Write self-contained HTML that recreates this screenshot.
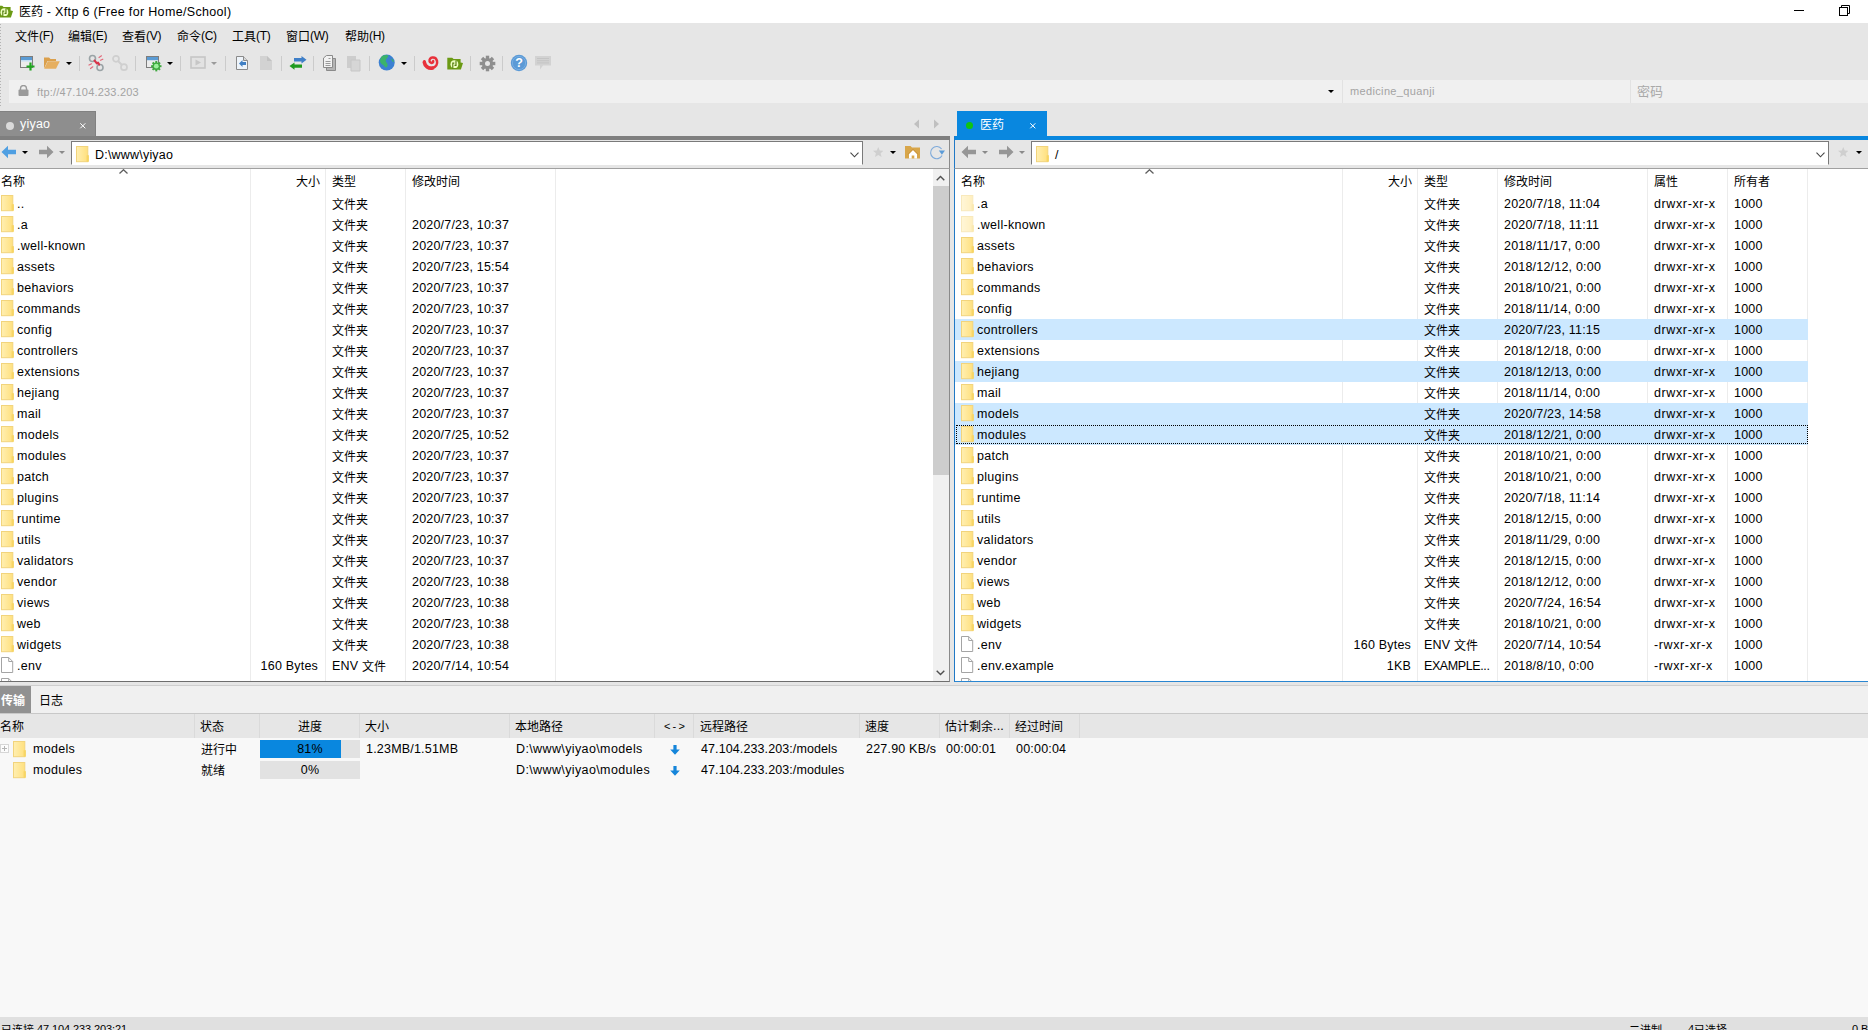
<!DOCTYPE html>
<html lang="zh-CN"><head><meta charset="utf-8"><title>医药 - Xftp 6 (Free for Home/School)</title>
<style>
*{margin:0;padding:0;box-sizing:border-box}
html,body{width:1868px;height:1030px;overflow:hidden;background:#e6e6e6}
body{font-family:"Liberation Sans","Noto Sans CJK SC",sans-serif;font-size:12px;color:#000;position:relative}
#app{position:absolute;left:0;top:0;width:1868px;height:1030px;overflow:hidden;background:#e6e6e6}
.a{position:absolute}
.t{position:absolute;white-space:nowrap;line-height:21px;height:21px;font-size:12.5px;letter-spacing:.2px;margin-top:1px}
.c{font-size:12px;letter-spacing:0;position:relative;top:1px}
.nm{letter-spacing:.3px}
.ex{letter-spacing:-.4px}
.big .c{font-size:13px}
#title .c{top:0}
.mn{font-size:12px;letter-spacing:-.3px}
.sb{font-size:11px;letter-spacing:-.1px}
.sb .c{font-size:11px}
.at{letter-spacing:.62px}
.ic{position:absolute}
.r{position:absolute;left:0;height:21px}
.sel{background:#cce8ff;box-shadow:-1px 0 0 #cce8ff}
.vl{position:absolute;width:1px;background:#ececec}
.hd{position:absolute;white-space:nowrap;line-height:22px;height:22px;margin-top:1px}
.sep{position:absolute;top:56px;width:1px;height:15px;background:#cbcbcb}
.dd{position:absolute;width:0;height:0;border-left:3px solid transparent;border-right:3px solid transparent;border-top:3px solid #000}
</style></head><body><div id="app">
<svg width="0" height="0" style="position:absolute"><defs><linearGradient id="fg" x1="0" x2="1" y1="0" y2="0"><stop offset="0" stop-color="#ffefb2"/><stop offset="1" stop-color="#ffe07e"/></linearGradient></defs></svg>

<div class="a" style="left:0;top:0;width:1868px;height:23px;background:#fff"></div>
<svg class="a" style="left:-3.2px;top:4.5px" width="17" height="13" viewBox="0 0 17 13"><path d="M.3 .8H5.2L6.6 2.1H13.6V5.6L16 5.9 13.9 12.4H.3Z" fill="#6b9a14"/><circle cx="7.4" cy="7.2" r="3.9" fill="#f0ffc4"/><path d="M5.8 11.4V6.1H7.3M9 3.4V8.4H7.5" fill="none" stroke="#557f10" stroke-width="1.15"/></svg>
<div class="t" id="title" style="left:19px;top:1px;font-size:12.5px;letter-spacing:.33px"><span class="c">医药</span> - Xftp 6 (Free for Home/School)</div>
<div class="a" style="left:1794px;top:10px;width:10px;height:1px;background:#000"></div>
<svg class="a" style="left:1839px;top:5px" width="12" height="12" viewBox="0 0 12 12"><path d="M2.5 2.5V.5H10.5V8.5H8.5" fill="none" stroke="#000"/><rect x=".5" y="2.5" width="8" height="8" fill="#fff" stroke="#000"/></svg>
<div class="t mn" style="left:15px;top:25px"><span class="c">文件</span>(F)</div>
<div class="t mn" style="left:68px;top:25px"><span class="c">编辑</span>(E)</div>
<div class="t mn" style="left:122px;top:25px"><span class="c">查看</span>(V)</div>
<div class="t mn" style="left:177px;top:25px"><span class="c">命令</span>(C)</div>
<div class="t mn" style="left:232px;top:25px"><span class="c">工具</span>(T)</div>
<div class="t mn" style="left:286px;top:25px"><span class="c">窗口</span>(W)</div>
<div class="t mn" style="left:345px;top:25px"><span class="c">帮助</span>(H)</div>
<div class="a" style="left:0;top:24px;width:1px;height:82px;background:repeating-linear-gradient(to bottom,#b4b4b4 0,#b4b4b4 1px,transparent 1px,transparent 3px)"></div>
<!-- toolbar icons -->
<svg class="a" style="left:19px;top:54px" width="18" height="19" viewBox="0 0 18 19"><rect x="1.5" y="2.5" width="12" height="11" fill="#ececec" stroke="#7d7d7d"/><rect x="2" y="3" width="11" height="3" fill="#5a9bd4"/><rect x="2" y="6" width="11" height="1.5" fill="#c4def4"/><path d="M11.5 8.5V16.5M7.5 12.5H15.5" stroke="#1fa51f" stroke-width="2.2"/></svg>
<svg class="a" style="left:43px;top:56px" width="18" height="14" viewBox="0 0 18 14"><path d="M1 1.5H6L7.5 3H13V5H4.5L1 12.5Z" fill="#dba04c"/><path d="M4.8 5.2H16.8L13 12.8H1.2Z" fill="#e6af60"/></svg>
<div class="dd" style="left:66px;top:62px"></div>
<div class="sep" style="left:79px"></div>
<svg class="a" style="left:87px;top:54px" width="18" height="18" viewBox="0 0 18 18"><circle cx="5.5" cy="4.5" r="3" fill="none" stroke="#9aa3a6" stroke-width="1.6"/><circle cx="13" cy="13.5" r="3" fill="none" stroke="#9aa3a6" stroke-width="1.6"/><path d="M7.5 6.5L10 9.5M11 8.5L12.2 10.6" stroke="#d8344a" stroke-width="2" stroke-linecap="round"/><path d="M12 3.5L14.5 1.8M13.5 6.2L15.8 5.2M2 11L4.5 9.8M3.5 14.5L5.8 12.8" stroke="#e26a7a" stroke-width="1.2" stroke-linecap="round"/></svg>
<svg class="a" style="left:111px;top:54px" width="18" height="18" viewBox="0 0 18 18"><circle cx="5" cy="4.8" r="3" fill="none" stroke="#cfcfcf" stroke-width="1.7"/><circle cx="13" cy="13.2" r="3" fill="none" stroke="#cfcfcf" stroke-width="1.7"/><path d="M7 7L11 11" stroke="#cfcfcf" stroke-width="2"/></svg>
<div class="sep" style="left:135px"></div>
<svg class="a" style="left:145px;top:54px" width="18" height="19" viewBox="0 0 18 19"><rect x="1.5" y="2.5" width="12" height="11" fill="#ececec" stroke="#7d7d7d"/><rect x="2" y="3" width="11" height="3.2" fill="#5a9bd4"/><g transform="translate(11.3 12.2)"><g fill="#3fa93f"><rect x="-1" y="-5.2" width="2" height="10.4"/><rect x="-1" y="-5.2" width="2" height="10.4" transform="rotate(45)"/><rect x="-1" y="-5.2" width="2" height="10.4" transform="rotate(90)"/><rect x="-1" y="-5.2" width="2" height="10.4" transform="rotate(135)"/><circle r="3.8"/></g><circle r="2.4" fill="#9cf09c"/></g></svg>
<div class="dd" style="left:167px;top:62px"></div>
<div class="sep" style="left:180px"></div>
<svg class="a" style="left:190px;top:56px" width="16" height="13" viewBox="0 0 16 13"><rect x="1" y="1" width="14" height="11" fill="#e2e2e2" stroke="#c6c6c6" stroke-width="1.6"/><path d="M5.5 3.5L11 6.5 5.5 9.5Z" fill="#c6c6c6"/></svg>
<div class="dd" style="left:211px;top:62px;border-top-color:#9a9a9a"></div>
<div class="sep" style="left:225px"></div>
<svg class="a" style="left:235px;top:55px" width="14" height="16" viewBox="0 0 14 16"><path d="M1.5 1.5H8.5L12.5 5.5V14.5H1.5Z" fill="#eef4fa" stroke="#8a8a8a"/><path d="M8.5 1.5V5.5H12.5" fill="#d8d8d8" stroke="#8a8a8a"/><path d="M4 8.5L7.5 5V7H11V10H7.5V12Z" fill="#3f7fc4"/></svg>
<svg class="a" style="left:259px;top:55px" width="14" height="16" viewBox="0 0 14 16"><path d="M1 1H8L13 6V15H1Z" fill="#d2d2d2"/><path d="M8 1V6H13Z" fill="#c2c2c2"/></svg>
<div class="sep" style="left:281px"></div>
<svg class="a" style="left:289px;top:56px" width="18" height="14" viewBox="0 0 18 14"><path d="M5 2H12.5V0L17.5 3.7 12.5 7.4V5.4H5Z" fill="#3f7fc8"/><path d="M13 8.4H5.5V6.4L.5 10.1 5.5 13.8V11.8H13Z" fill="#1f9a1f"/></svg>
<div class="sep" style="left:313px"></div>
<svg class="a" style="left:322px;top:54px" width="15" height="18" viewBox="0 0 15 18"><path d="M4.5 4.5H13.5V16.5H4.5Z" fill="#b4b4b4" stroke="#8a8a8a"/><path d="M1.5 4L4.5 1.5H10.5V13.5H1.5Z" fill="#f2f2f2" stroke="#8a8a8a"/><path d="M3.5 7.5H8.5M3.5 9.5H8.5M3.5 11.5H8.5M6.5 4.5H8.5" stroke="#9a9a9a"/></svg>
<svg class="a" style="left:346px;top:54px" width="15" height="18" viewBox="0 0 15 18"><path d="M1 2H10V14H1Z" fill="#cdcdcd"/><path d="M5 6H14V17H5Z" fill="#d6d6d6" stroke="#c6c6c6"/></svg>
<div class="sep" style="left:369px"></div>
<svg class="a" style="left:378px;top:54px" width="18" height="18" viewBox="0 0 18 18"><circle cx="8.7" cy="8.6" r="8" fill="#3b80d2"/><path d="M5 1.6C7.5 .6 9.5 .8 10.5 1.5 10 3.8 8 4.5 7.8 6.5 7.6 8.5 10 9 9.6 11.5 9.3 13.5 7.5 14.2 6.6 12.5 5.6 10.5 3 10.5 2.2 8 1.6 5.5 3 2.6 5 1.6Z" fill="#3bb36a"/><path d="M13.5 4.5C15 5.2 16 7 15.8 8.2 14.6 8 13.2 6.2 13.5 4.5Z" fill="#3bb36a"/></svg>
<div class="dd" style="left:401px;top:62px"></div>
<div class="sep" style="left:414px"></div>
<svg class="a" style="left:422px;top:55px" width="18" height="16" viewBox="0 0 18 16"><path d="M2.4 6.2C2.6 10.8 6.4 13.6 10.4 12.9 14 12.2 15.8 9 15 5.9 14.4 3.6 12.3 2.3 10.3 2.6 8.4 2.9 7.3 4.5 7.6 6.1 7.9 7.4 9.1 8.1 10.2 7.8 11 7.6 11.4 6.8 11.1 6.1" fill="none" stroke="#e8313b" stroke-width="2.5" stroke-linecap="round"/><path d="M2.3 7.2C2.9 11.4 6.6 13.9 10.6 13.1" fill="none" stroke="#e8313b" stroke-width="3.6" stroke-linecap="round"/></svg>
<svg class="a" style="left:447px;top:56.5px" width="17" height="13" viewBox="0 0 17 13"><path d="M.3 .8H5.2L6.6 2.1H13.6V5.6L16 5.9 13.9 12.4H.3Z" fill="#6b9a14"/><circle cx="7.4" cy="7.2" r="3.9" fill="#f0ffc4"/><path d="M5.8 11.4V6.1H7.3M9 3.4V8.4H7.5" fill="none" stroke="#557f10" stroke-width="1.15"/></svg>
<div class="sep" style="left:470px"></div>
<svg class="a" style="left:479px;top:55px" width="17" height="17" viewBox="-8.5 -8.5 17 17"><g fill="#8e8e8e"><rect x="-1.7" y="-7.8" width="3.4" height="15.6"/><rect x="-1.7" y="-7.8" width="3.4" height="15.6" transform="rotate(45)"/><rect x="-1.7" y="-7.8" width="3.4" height="15.6" transform="rotate(90)"/><rect x="-1.7" y="-7.8" width="3.4" height="15.6" transform="rotate(135)"/><circle r="5.6"/></g><circle r="2.5" fill="#e6e6e6"/></svg>
<div class="sep" style="left:502px"></div>
<svg class="a" style="left:510px;top:54px" width="18" height="18" viewBox="0 0 18 18"><circle cx="9" cy="9" r="8.2" fill="#5b9ad6"/><circle cx="9" cy="9" r="6.6" fill="none" stroke="#78aee2" stroke-width="1"/><text x="9" y="13.4" font-family="Liberation Sans,sans-serif" font-size="12.5" font-weight="bold" fill="#fff" text-anchor="middle">?</text></svg>
<svg class="a" style="left:534px;top:55px" width="18" height="16" viewBox="0 0 18 16"><path d="M1 1H17V10.5H9L6 14.5V10.5H1Z" fill="#d2d2d2"/><path d="M3 3.5H15M3 5.7H15M3 7.9H15" stroke="#c4c4c4" stroke-width="1"/></svg>

<div class="a" style="left:9px;top:80px;width:1859px;height:23px;background:#f0f0f0"></div>
<svg class="a" style="left:18px;top:85px" width="11" height="12" viewBox="0 0 11 12"><path d="M2.5 5V3.5a3 3 0 0 1 6 0V5" fill="none" stroke="#9a9a9a" stroke-width="1.4"/><rect x=".5" y="4.5" width="10" height="6.5" rx="1" fill="#9a9a9a"/></svg>
<div class="t" style="left:37px;top:81px;font-size:11px;color:#a3a3a3">ftp://47.104.233.203</div>
<div class="dd" style="left:1328px;top:90px"></div>
<div class="a" style="left:1342px;top:80px;width:1px;height:23px;background:#e2e2e2"></div>
<div class="t" style="left:1350px;top:80px;font-size:11px;letter-spacing:.35px;color:#a3a3a3">medicine_quanji</div>
<div class="a" style="left:1630px;top:80px;width:1px;height:23px;background:#e2e2e2"></div>
<div class="t big" style="left:1637px;top:79px;font-size:13px;color:#a9a9a9"><span class="c">密码</span></div>
<div class="a" style="left:0;top:111px;width:96px;height:26px;background:#8e8e8e;border-top:1px solid #818181;border-right:1px solid #818181"></div>
<div class="a" style="left:0;top:136px;width:950px;height:4px;background:#7f7f7f"></div>
<div class="a" style="left:6px;top:122px;width:8px;height:8px;border-radius:4px;background:#dadada"></div>
<div class="t" style="left:20px;top:113px;font-size:12.5px;color:#fff">yiyao</div>
<svg class="a" style="left:79px;top:122px" width="8" height="8" viewBox="0 0 8 8"><path d="M1.3 1.3L6.3 6.3M6.3 1.3L1.3 6.3" stroke="#fff" stroke-width="1"/></svg>
<svg class="a" style="left:912px;top:119px" width="30" height="10" viewBox="0 0 30 10"><path d="M7 0.5V9.5L2 5Z" fill="#c0c0c0"/><path d="M22 0.5V9.5L27 5Z" fill="#c0c0c0"/></svg>
<div class="a" style="left:957px;top:111px;width:90px;height:26px;background:#0987df"></div>
<div class="a" style="left:954px;top:136px;width:914px;height:4px;background:#0987df"></div>
<div class="a" style="left:965.5px;top:121.5px;width:7.5px;height:7.5px;border-radius:4px;background:#10c410"></div>
<div class="t" style="left:980px;top:112px;font-size:13px;color:#fff"><span class="c">医药</span></div>
<svg class="a" style="left:1029px;top:122px" width="8" height="8" viewBox="0 0 8 8"><path d="M1.3 1.3L6.3 6.3M6.3 1.3L1.3 6.3" stroke="#fff" stroke-width="1"/></svg>
<div class="a" style="left:949px;top:140px;width:1px;height:28px;background:#8a8a8a"></div>
<div class="a" style="left:954px;top:136px;width:1px;height:546px;background:#2179c6"></div>
<svg class="a" style="left:1px;top:145px" width="16" height="14" viewBox="0 0 16 14"><path d="M.5 7L7 .8V4.8H15V9.2H7V13.2Z" fill="#4f9fe2"/></svg>
<div class="dd" style="left:22px;top:151px"></div>
<svg class="a" style="left:38px;top:145px" width="16" height="14" viewBox="0 0 16 14"><path d="M15.5 7L9 .8V4.8H1V9.2H9V13.2Z" fill="#969696"/></svg>
<div class="dd" style="left:59px;top:151px;border-top-color:#8a8a8a"></div>
<div class="a" style="left:71px;top:141px;width:792px;height:24px;background:#fff;border:1px solid #7a7a7a;border-bottom-color:#fff"></div>
<svg class="ic" style="left:76px;top:146px" width="14" height="17" viewBox="0 0 14 17"><rect x=".5" y=".5" width="11.3" height="15.2" fill="url(#fg)" stroke="#f2d47c"/><rect x="10.6" y="9.2" width="2.3" height="6.5" fill="#f7d565"/></svg>
<div class="t" style="left:95px;top:144px;font-size:12.5px">D:\www\yiyao</div>
<svg class="a" style="left:849.5px;top:152px" width="9" height="6" viewBox="0 0 9 6"><path d="M.5 .6L4.5 4.8 8.5 .6" fill="none" stroke="#444" stroke-width="1.1"/></svg>
<svg class="a" style="left:872.5px;top:147px" width="10.5" height="10.5" viewBox="0 0 13 13"><path d="M6.5 0L8.3 4.3 13 4.7 9.4 7.7 10.6 12.3 6.5 9.8 2.4 12.3 3.6 7.7 0 4.7 4.7 4.3Z" fill="#cfcfcf"/></svg>
<div class="dd" style="left:890px;top:151px"></div>
<svg class="a" style="left:905px;top:145px" width="16" height="14" viewBox="0 0 16 14"><path d="M0 1H5.5L7 2.5H15V13.5H0Z" fill="#d8a64a"/><path d="M4 9L8 5 12 9V13.5H9.3V10.5H6.7V13.5H4Z" fill="#fff"/><path d="M3 9.3L8 4.3 13 9.3" fill="none" stroke="#c8903a" stroke-width="1"/></svg>
<svg class="a" style="left:928px;top:144px" width="18" height="17" viewBox="0 0 18 17"><path d="M13.6 5A6.1 6.1 0 1 0 14.1 11.5" fill="none" stroke="#7eaada" stroke-width="1.1"/><path d="M10.8 6.4H17L13.9 10.8Z" fill="#5b9bd8"/></svg>
<svg class="a" style="left:961px;top:145px" width="16" height="14" viewBox="0 0 16 14"><path d="M.5 7L7 .8V4.8H15V9.2H7V13.2Z" fill="#969696"/></svg>
<div class="dd" style="left:982px;top:151px;border-top-color:#8a8a8a"></div>
<svg class="a" style="left:998px;top:145px" width="16" height="14" viewBox="0 0 16 14"><path d="M15.5 7L9 .8V4.8H1V9.2H9V13.2Z" fill="#969696"/></svg>
<div class="dd" style="left:1019px;top:151px;border-top-color:#8a8a8a"></div>
<div class="a" style="left:1031px;top:141px;width:798px;height:24px;background:#fff;border:1px solid #7a7a7a;border-bottom-color:#fff"></div>
<svg class="ic" style="left:1036px;top:146px" width="14" height="17" viewBox="0 0 14 17"><rect x=".5" y=".5" width="11.3" height="15.2" fill="url(#fg)" stroke="#f2d47c"/><rect x="10.6" y="9.2" width="2.3" height="6.5" fill="#f7d565"/></svg>
<div class="t" style="left:1055px;top:144px;font-size:12.5px">/</div>
<svg class="a" style="left:1815.5px;top:152px" width="9" height="6" viewBox="0 0 9 6"><path d="M.5 .6L4.5 4.8 8.5 .6" fill="none" stroke="#444" stroke-width="1.1"/></svg>
<svg class="a" style="left:1837.5px;top:147px" width="10.5" height="10.5" viewBox="0 0 13 13"><path d="M6.5 0L8.3 4.3 13 4.7 9.4 7.7 10.6 12.3 6.5 9.8 2.4 12.3 3.6 7.7 0 4.7 4.7 4.3Z" fill="#cfcfcf"/></svg>
<div class="dd" style="left:1856px;top:151px"></div>
<div class="a" id="ll" style="left:0;top:168px;width:950px;height:514px;background:#fff;border-top:1px solid #a0a0a0;border-right:1px solid #8a8a8a;border-bottom:1px solid #6e6e6e;overflow:hidden">
<div class="vl" style="left:250px;top:0;height:513px"></div>
<div class="vl" style="left:325px;top:0;height:513px"></div>
<div class="vl" style="left:405px;top:0;height:513px"></div>
<div class="vl" style="left:555px;top:0;height:513px"></div>
<div class="hd" style="left:1px;top:0"><span class="c">名称</span></div><div class="hd" style="right:629px;top:0"><span class="c">大小</span></div><div class="hd" style="left:332px;top:0"><span class="c">类型</span></div><div class="hd" style="left:412px;top:0"><span class="c">修改时间</span></div>
<svg class="a" style="left:119px;top:0" width="9" height="5" viewBox="0 0 9 5"><path d="M.5 4.5L4.5 .7 8.5 4.5" fill="none" stroke="#5e5e5e" stroke-width="1.25"/></svg>
<div class="r" style="top:24px;width:933px">
<svg class="ic" style="left:1px;top:2px" width="14" height="17" viewBox="0 0 14 17"><rect x=".5" y=".5" width="11.3" height="15.2" fill="url(#fg)" stroke="#f2d47c"/><rect x="10.6" y="9.2" width="2.3" height="6.5" fill="#f7d565"/></svg>
<div class="t nm" style="left:17px;top:0">..</div>
<div class="t" style="left:332px;top:0"><span class="c">文件夹</span></div>
</div>
<div class="r" style="top:45px;width:933px">
<svg class="ic" style="left:1px;top:2px" width="14" height="17" viewBox="0 0 14 17"><rect x=".5" y=".5" width="11.3" height="15.2" fill="url(#fg)" stroke="#f2d47c"/><rect x="10.6" y="9.2" width="2.3" height="6.5" fill="#f7d565"/></svg>
<div class="t nm" style="left:17px;top:0">.a</div>
<div class="t" style="left:332px;top:0"><span class="c">文件夹</span></div>
<div class="t" style="left:412px;top:0">2020/7/23, 10:37</div>
</div>
<div class="r" style="top:66px;width:933px">
<svg class="ic" style="left:1px;top:2px" width="14" height="17" viewBox="0 0 14 17"><rect x=".5" y=".5" width="11.3" height="15.2" fill="url(#fg)" stroke="#f2d47c"/><rect x="10.6" y="9.2" width="2.3" height="6.5" fill="#f7d565"/></svg>
<div class="t nm" style="left:17px;top:0">.well-known</div>
<div class="t" style="left:332px;top:0"><span class="c">文件夹</span></div>
<div class="t" style="left:412px;top:0">2020/7/23, 10:37</div>
</div>
<div class="r" style="top:87px;width:933px">
<svg class="ic" style="left:1px;top:2px" width="14" height="17" viewBox="0 0 14 17"><rect x=".5" y=".5" width="11.3" height="15.2" fill="url(#fg)" stroke="#f2d47c"/><rect x="10.6" y="9.2" width="2.3" height="6.5" fill="#f7d565"/></svg>
<div class="t nm" style="left:17px;top:0">assets</div>
<div class="t" style="left:332px;top:0"><span class="c">文件夹</span></div>
<div class="t" style="left:412px;top:0">2020/7/23, 15:54</div>
</div>
<div class="r" style="top:108px;width:933px">
<svg class="ic" style="left:1px;top:2px" width="14" height="17" viewBox="0 0 14 17"><rect x=".5" y=".5" width="11.3" height="15.2" fill="url(#fg)" stroke="#f2d47c"/><rect x="10.6" y="9.2" width="2.3" height="6.5" fill="#f7d565"/></svg>
<div class="t nm" style="left:17px;top:0">behaviors</div>
<div class="t" style="left:332px;top:0"><span class="c">文件夹</span></div>
<div class="t" style="left:412px;top:0">2020/7/23, 10:37</div>
</div>
<div class="r" style="top:129px;width:933px">
<svg class="ic" style="left:1px;top:2px" width="14" height="17" viewBox="0 0 14 17"><rect x=".5" y=".5" width="11.3" height="15.2" fill="url(#fg)" stroke="#f2d47c"/><rect x="10.6" y="9.2" width="2.3" height="6.5" fill="#f7d565"/></svg>
<div class="t nm" style="left:17px;top:0">commands</div>
<div class="t" style="left:332px;top:0"><span class="c">文件夹</span></div>
<div class="t" style="left:412px;top:0">2020/7/23, 10:37</div>
</div>
<div class="r" style="top:150px;width:933px">
<svg class="ic" style="left:1px;top:2px" width="14" height="17" viewBox="0 0 14 17"><rect x=".5" y=".5" width="11.3" height="15.2" fill="url(#fg)" stroke="#f2d47c"/><rect x="10.6" y="9.2" width="2.3" height="6.5" fill="#f7d565"/></svg>
<div class="t nm" style="left:17px;top:0">config</div>
<div class="t" style="left:332px;top:0"><span class="c">文件夹</span></div>
<div class="t" style="left:412px;top:0">2020/7/23, 10:37</div>
</div>
<div class="r" style="top:171px;width:933px">
<svg class="ic" style="left:1px;top:2px" width="14" height="17" viewBox="0 0 14 17"><rect x=".5" y=".5" width="11.3" height="15.2" fill="url(#fg)" stroke="#f2d47c"/><rect x="10.6" y="9.2" width="2.3" height="6.5" fill="#f7d565"/></svg>
<div class="t nm" style="left:17px;top:0">controllers</div>
<div class="t" style="left:332px;top:0"><span class="c">文件夹</span></div>
<div class="t" style="left:412px;top:0">2020/7/23, 10:37</div>
</div>
<div class="r" style="top:192px;width:933px">
<svg class="ic" style="left:1px;top:2px" width="14" height="17" viewBox="0 0 14 17"><rect x=".5" y=".5" width="11.3" height="15.2" fill="url(#fg)" stroke="#f2d47c"/><rect x="10.6" y="9.2" width="2.3" height="6.5" fill="#f7d565"/></svg>
<div class="t nm" style="left:17px;top:0">extensions</div>
<div class="t" style="left:332px;top:0"><span class="c">文件夹</span></div>
<div class="t" style="left:412px;top:0">2020/7/23, 10:37</div>
</div>
<div class="r" style="top:213px;width:933px">
<svg class="ic" style="left:1px;top:2px" width="14" height="17" viewBox="0 0 14 17"><rect x=".5" y=".5" width="11.3" height="15.2" fill="url(#fg)" stroke="#f2d47c"/><rect x="10.6" y="9.2" width="2.3" height="6.5" fill="#f7d565"/></svg>
<div class="t nm" style="left:17px;top:0">hejiang</div>
<div class="t" style="left:332px;top:0"><span class="c">文件夹</span></div>
<div class="t" style="left:412px;top:0">2020/7/23, 10:37</div>
</div>
<div class="r" style="top:234px;width:933px">
<svg class="ic" style="left:1px;top:2px" width="14" height="17" viewBox="0 0 14 17"><rect x=".5" y=".5" width="11.3" height="15.2" fill="url(#fg)" stroke="#f2d47c"/><rect x="10.6" y="9.2" width="2.3" height="6.5" fill="#f7d565"/></svg>
<div class="t nm" style="left:17px;top:0">mail</div>
<div class="t" style="left:332px;top:0"><span class="c">文件夹</span></div>
<div class="t" style="left:412px;top:0">2020/7/23, 10:37</div>
</div>
<div class="r" style="top:255px;width:933px">
<svg class="ic" style="left:1px;top:2px" width="14" height="17" viewBox="0 0 14 17"><rect x=".5" y=".5" width="11.3" height="15.2" fill="url(#fg)" stroke="#f2d47c"/><rect x="10.6" y="9.2" width="2.3" height="6.5" fill="#f7d565"/></svg>
<div class="t nm" style="left:17px;top:0">models</div>
<div class="t" style="left:332px;top:0"><span class="c">文件夹</span></div>
<div class="t" style="left:412px;top:0">2020/7/25, 10:52</div>
</div>
<div class="r" style="top:276px;width:933px">
<svg class="ic" style="left:1px;top:2px" width="14" height="17" viewBox="0 0 14 17"><rect x=".5" y=".5" width="11.3" height="15.2" fill="url(#fg)" stroke="#f2d47c"/><rect x="10.6" y="9.2" width="2.3" height="6.5" fill="#f7d565"/></svg>
<div class="t nm" style="left:17px;top:0">modules</div>
<div class="t" style="left:332px;top:0"><span class="c">文件夹</span></div>
<div class="t" style="left:412px;top:0">2020/7/23, 10:37</div>
</div>
<div class="r" style="top:297px;width:933px">
<svg class="ic" style="left:1px;top:2px" width="14" height="17" viewBox="0 0 14 17"><rect x=".5" y=".5" width="11.3" height="15.2" fill="url(#fg)" stroke="#f2d47c"/><rect x="10.6" y="9.2" width="2.3" height="6.5" fill="#f7d565"/></svg>
<div class="t nm" style="left:17px;top:0">patch</div>
<div class="t" style="left:332px;top:0"><span class="c">文件夹</span></div>
<div class="t" style="left:412px;top:0">2020/7/23, 10:37</div>
</div>
<div class="r" style="top:318px;width:933px">
<svg class="ic" style="left:1px;top:2px" width="14" height="17" viewBox="0 0 14 17"><rect x=".5" y=".5" width="11.3" height="15.2" fill="url(#fg)" stroke="#f2d47c"/><rect x="10.6" y="9.2" width="2.3" height="6.5" fill="#f7d565"/></svg>
<div class="t nm" style="left:17px;top:0">plugins</div>
<div class="t" style="left:332px;top:0"><span class="c">文件夹</span></div>
<div class="t" style="left:412px;top:0">2020/7/23, 10:37</div>
</div>
<div class="r" style="top:339px;width:933px">
<svg class="ic" style="left:1px;top:2px" width="14" height="17" viewBox="0 0 14 17"><rect x=".5" y=".5" width="11.3" height="15.2" fill="url(#fg)" stroke="#f2d47c"/><rect x="10.6" y="9.2" width="2.3" height="6.5" fill="#f7d565"/></svg>
<div class="t nm" style="left:17px;top:0">runtime</div>
<div class="t" style="left:332px;top:0"><span class="c">文件夹</span></div>
<div class="t" style="left:412px;top:0">2020/7/23, 10:37</div>
</div>
<div class="r" style="top:360px;width:933px">
<svg class="ic" style="left:1px;top:2px" width="14" height="17" viewBox="0 0 14 17"><rect x=".5" y=".5" width="11.3" height="15.2" fill="url(#fg)" stroke="#f2d47c"/><rect x="10.6" y="9.2" width="2.3" height="6.5" fill="#f7d565"/></svg>
<div class="t nm" style="left:17px;top:0">utils</div>
<div class="t" style="left:332px;top:0"><span class="c">文件夹</span></div>
<div class="t" style="left:412px;top:0">2020/7/23, 10:37</div>
</div>
<div class="r" style="top:381px;width:933px">
<svg class="ic" style="left:1px;top:2px" width="14" height="17" viewBox="0 0 14 17"><rect x=".5" y=".5" width="11.3" height="15.2" fill="url(#fg)" stroke="#f2d47c"/><rect x="10.6" y="9.2" width="2.3" height="6.5" fill="#f7d565"/></svg>
<div class="t nm" style="left:17px;top:0">validators</div>
<div class="t" style="left:332px;top:0"><span class="c">文件夹</span></div>
<div class="t" style="left:412px;top:0">2020/7/23, 10:37</div>
</div>
<div class="r" style="top:402px;width:933px">
<svg class="ic" style="left:1px;top:2px" width="14" height="17" viewBox="0 0 14 17"><rect x=".5" y=".5" width="11.3" height="15.2" fill="url(#fg)" stroke="#f2d47c"/><rect x="10.6" y="9.2" width="2.3" height="6.5" fill="#f7d565"/></svg>
<div class="t nm" style="left:17px;top:0">vendor</div>
<div class="t" style="left:332px;top:0"><span class="c">文件夹</span></div>
<div class="t" style="left:412px;top:0">2020/7/23, 10:38</div>
</div>
<div class="r" style="top:423px;width:933px">
<svg class="ic" style="left:1px;top:2px" width="14" height="17" viewBox="0 0 14 17"><rect x=".5" y=".5" width="11.3" height="15.2" fill="url(#fg)" stroke="#f2d47c"/><rect x="10.6" y="9.2" width="2.3" height="6.5" fill="#f7d565"/></svg>
<div class="t nm" style="left:17px;top:0">views</div>
<div class="t" style="left:332px;top:0"><span class="c">文件夹</span></div>
<div class="t" style="left:412px;top:0">2020/7/23, 10:38</div>
</div>
<div class="r" style="top:444px;width:933px">
<svg class="ic" style="left:1px;top:2px" width="14" height="17" viewBox="0 0 14 17"><rect x=".5" y=".5" width="11.3" height="15.2" fill="url(#fg)" stroke="#f2d47c"/><rect x="10.6" y="9.2" width="2.3" height="6.5" fill="#f7d565"/></svg>
<div class="t nm" style="left:17px;top:0">web</div>
<div class="t" style="left:332px;top:0"><span class="c">文件夹</span></div>
<div class="t" style="left:412px;top:0">2020/7/23, 10:38</div>
</div>
<div class="r" style="top:465px;width:933px">
<svg class="ic" style="left:1px;top:2px" width="14" height="17" viewBox="0 0 14 17"><rect x=".5" y=".5" width="11.3" height="15.2" fill="url(#fg)" stroke="#f2d47c"/><rect x="10.6" y="9.2" width="2.3" height="6.5" fill="#f7d565"/></svg>
<div class="t nm" style="left:17px;top:0">widgets</div>
<div class="t" style="left:332px;top:0"><span class="c">文件夹</span></div>
<div class="t" style="left:412px;top:0">2020/7/23, 10:38</div>
</div>
<div class="r" style="top:486px;width:933px">
<svg class="ic" style="left:1px;top:2px" width="14" height="17" viewBox="0 0 14 17"><path d="M.5 .5H7.7L11.7 4.5V15.5H.5Z" fill="#fff" stroke="#a4a4a4"/><path d="M7.7 .5V4.5H11.7" fill="none" stroke="#a4a4a4"/></svg>
<div class="t nm" style="left:17px;top:0">.env</div>
<div class="t" style="right:615px;top:0">160 Bytes</div>
<div class="t" style="left:332px;top:0">ENV <span class="c">文件</span></div>
<div class="t" style="left:412px;top:0">2020/7/14, 10:54</div>
</div>
<svg class="ic" style="left:1px;top:509px" width="14" height="17" viewBox="0 0 14 17"><path d="M.5 .5H7.7L11.7 4.5V15.5H.5Z" fill="#fff" stroke="#a4a4a4"/><path d="M7.7 .5V4.5H11.7" fill="none" stroke="#a4a4a4"/></svg>
<div class="a" style="left:933px;top:0;width:16px;height:513px;background:#f0f0f0"></div>
<div class="a" style="left:933px;top:17px;width:16px;height:289px;background:#cdcdcd"></div>
<svg class="a" style="left:936px;top:6px" width="9" height="6" viewBox="0 0 9 6"><path d="M.7 5.3L4.5 1.5 8.3 5.3" fill="none" stroke="#505050" stroke-width="1.4"/></svg>
<svg class="a" style="left:936px;top:501px" width="9" height="6" viewBox="0 0 9 6"><path d="M.7 .7L4.5 4.5 8.3 .7" fill="none" stroke="#505050" stroke-width="1.4"/></svg>
</div>
<div class="a" id="rl" style="left:954px;top:168px;width:914px;height:514px;background:#fff;border-top:1px solid #a0a0a0;border-left:1px solid #2179c6;border-bottom:1px solid #2a86d1;overflow:hidden">
<div class="vl" style="left:387px;top:0;height:513px"></div>
<div class="vl" style="left:462px;top:0;height:513px"></div>
<div class="vl" style="left:542px;top:0;height:513px"></div>
<div class="vl" style="left:692px;top:0;height:513px"></div>
<div class="vl" style="left:772px;top:0;height:513px"></div>
<div class="vl" style="left:852px;top:0;height:513px"></div>
<div class="hd" style="left:6px;top:0"><span class="c">名称</span></div><div class="hd" style="left:433px;top:0"><span class="c">大小</span></div><div class="hd" style="left:469px;top:0"><span class="c">类型</span></div><div class="hd" style="left:549px;top:0"><span class="c">修改时间</span></div><div class="hd" style="left:699px;top:0"><span class="c">属性</span></div><div class="hd" style="left:779px;top:0"><span class="c">所有者</span></div>
<svg class="a" style="left:190px;top:0" width="9" height="5" viewBox="0 0 9 5"><path d="M.5 4.5L4.5 .7 8.5 4.5" fill="none" stroke="#5e5e5e" stroke-width="1.25"/></svg>
<div class="r" style="top:24px;left:1px;width:852px">
<svg class="ic" style="left:5px;top:2px" width="14" height="17" viewBox="0 0 14 17" opacity=".5"><rect x=".5" y=".5" width="11.3" height="15.2" fill="url(#fg)" stroke="#f2d47c"/><rect x="10.6" y="9.2" width="2.3" height="6.5" fill="#f7d565"/></svg>
<div class="t nm" style="left:21px;top:0">.a</div>
<div class="t" style="left:468px;top:0"><span class="c">文件夹</span></div>
<div class="t" style="left:548px;top:0">2020/7/18, 11:04</div>
<div class="t at" style="left:698px;top:0">drwxr-xr-x</div>
<div class="t" style="left:778px;top:0">1000</div>
</div>
<div class="r" style="top:45px;left:1px;width:852px">
<svg class="ic" style="left:5px;top:2px" width="14" height="17" viewBox="0 0 14 17" opacity=".5"><rect x=".5" y=".5" width="11.3" height="15.2" fill="url(#fg)" stroke="#f2d47c"/><rect x="10.6" y="9.2" width="2.3" height="6.5" fill="#f7d565"/></svg>
<div class="t nm" style="left:21px;top:0">.well-known</div>
<div class="t" style="left:468px;top:0"><span class="c">文件夹</span></div>
<div class="t" style="left:548px;top:0">2020/7/18, 11:11</div>
<div class="t at" style="left:698px;top:0">drwxr-xr-x</div>
<div class="t" style="left:778px;top:0">1000</div>
</div>
<div class="r" style="top:66px;left:1px;width:852px">
<svg class="ic" style="left:5px;top:2px" width="14" height="17" viewBox="0 0 14 17"><rect x=".5" y=".5" width="11.3" height="15.2" fill="url(#fg)" stroke="#f2d47c"/><rect x="10.6" y="9.2" width="2.3" height="6.5" fill="#f7d565"/></svg>
<div class="t nm" style="left:21px;top:0">assets</div>
<div class="t" style="left:468px;top:0"><span class="c">文件夹</span></div>
<div class="t" style="left:548px;top:0">2018/11/17, 0:00</div>
<div class="t at" style="left:698px;top:0">drwxr-xr-x</div>
<div class="t" style="left:778px;top:0">1000</div>
</div>
<div class="r" style="top:87px;left:1px;width:852px">
<svg class="ic" style="left:5px;top:2px" width="14" height="17" viewBox="0 0 14 17"><rect x=".5" y=".5" width="11.3" height="15.2" fill="url(#fg)" stroke="#f2d47c"/><rect x="10.6" y="9.2" width="2.3" height="6.5" fill="#f7d565"/></svg>
<div class="t nm" style="left:21px;top:0">behaviors</div>
<div class="t" style="left:468px;top:0"><span class="c">文件夹</span></div>
<div class="t" style="left:548px;top:0">2018/12/12, 0:00</div>
<div class="t at" style="left:698px;top:0">drwxr-xr-x</div>
<div class="t" style="left:778px;top:0">1000</div>
</div>
<div class="r" style="top:108px;left:1px;width:852px">
<svg class="ic" style="left:5px;top:2px" width="14" height="17" viewBox="0 0 14 17"><rect x=".5" y=".5" width="11.3" height="15.2" fill="url(#fg)" stroke="#f2d47c"/><rect x="10.6" y="9.2" width="2.3" height="6.5" fill="#f7d565"/></svg>
<div class="t nm" style="left:21px;top:0">commands</div>
<div class="t" style="left:468px;top:0"><span class="c">文件夹</span></div>
<div class="t" style="left:548px;top:0">2018/10/21, 0:00</div>
<div class="t at" style="left:698px;top:0">drwxr-xr-x</div>
<div class="t" style="left:778px;top:0">1000</div>
</div>
<div class="r" style="top:129px;left:1px;width:852px">
<svg class="ic" style="left:5px;top:2px" width="14" height="17" viewBox="0 0 14 17"><rect x=".5" y=".5" width="11.3" height="15.2" fill="url(#fg)" stroke="#f2d47c"/><rect x="10.6" y="9.2" width="2.3" height="6.5" fill="#f7d565"/></svg>
<div class="t nm" style="left:21px;top:0">config</div>
<div class="t" style="left:468px;top:0"><span class="c">文件夹</span></div>
<div class="t" style="left:548px;top:0">2018/11/14, 0:00</div>
<div class="t at" style="left:698px;top:0">drwxr-xr-x</div>
<div class="t" style="left:778px;top:0">1000</div>
</div>
<div class="r sel" style="top:150px;left:1px;width:852px">
<svg class="ic" style="left:5px;top:2px" width="14" height="17" viewBox="0 0 14 17"><rect x=".5" y=".5" width="11.3" height="15.2" fill="url(#fg)" stroke="#f2d47c"/><rect x="10.6" y="9.2" width="2.3" height="6.5" fill="#f7d565"/></svg>
<div class="t nm" style="left:21px;top:0">controllers</div>
<div class="t" style="left:468px;top:0"><span class="c">文件夹</span></div>
<div class="t" style="left:548px;top:0">2020/7/23, 11:15</div>
<div class="t at" style="left:698px;top:0">drwxr-xr-x</div>
<div class="t" style="left:778px;top:0">1000</div>
</div>
<div class="r" style="top:171px;left:1px;width:852px">
<svg class="ic" style="left:5px;top:2px" width="14" height="17" viewBox="0 0 14 17"><rect x=".5" y=".5" width="11.3" height="15.2" fill="url(#fg)" stroke="#f2d47c"/><rect x="10.6" y="9.2" width="2.3" height="6.5" fill="#f7d565"/></svg>
<div class="t nm" style="left:21px;top:0">extensions</div>
<div class="t" style="left:468px;top:0"><span class="c">文件夹</span></div>
<div class="t" style="left:548px;top:0">2018/12/18, 0:00</div>
<div class="t at" style="left:698px;top:0">drwxr-xr-x</div>
<div class="t" style="left:778px;top:0">1000</div>
</div>
<div class="r sel" style="top:192px;left:1px;width:852px">
<svg class="ic" style="left:5px;top:2px" width="14" height="17" viewBox="0 0 14 17"><rect x=".5" y=".5" width="11.3" height="15.2" fill="url(#fg)" stroke="#f2d47c"/><rect x="10.6" y="9.2" width="2.3" height="6.5" fill="#f7d565"/></svg>
<div class="t nm" style="left:21px;top:0">hejiang</div>
<div class="t" style="left:468px;top:0"><span class="c">文件夹</span></div>
<div class="t" style="left:548px;top:0">2018/12/13, 0:00</div>
<div class="t at" style="left:698px;top:0">drwxr-xr-x</div>
<div class="t" style="left:778px;top:0">1000</div>
</div>
<div class="r" style="top:213px;left:1px;width:852px">
<svg class="ic" style="left:5px;top:2px" width="14" height="17" viewBox="0 0 14 17"><rect x=".5" y=".5" width="11.3" height="15.2" fill="url(#fg)" stroke="#f2d47c"/><rect x="10.6" y="9.2" width="2.3" height="6.5" fill="#f7d565"/></svg>
<div class="t nm" style="left:21px;top:0">mail</div>
<div class="t" style="left:468px;top:0"><span class="c">文件夹</span></div>
<div class="t" style="left:548px;top:0">2018/11/14, 0:00</div>
<div class="t at" style="left:698px;top:0">drwxr-xr-x</div>
<div class="t" style="left:778px;top:0">1000</div>
</div>
<div class="r sel" style="top:234px;left:1px;width:852px">
<svg class="ic" style="left:5px;top:2px" width="14" height="17" viewBox="0 0 14 17"><rect x=".5" y=".5" width="11.3" height="15.2" fill="url(#fg)" stroke="#f2d47c"/><rect x="10.6" y="9.2" width="2.3" height="6.5" fill="#f7d565"/></svg>
<div class="t nm" style="left:21px;top:0">models</div>
<div class="t" style="left:468px;top:0"><span class="c">文件夹</span></div>
<div class="t" style="left:548px;top:0">2020/7/23, 14:58</div>
<div class="t at" style="left:698px;top:0">drwxr-xr-x</div>
<div class="t" style="left:778px;top:0">1000</div>
</div>
<div class="r sel" style="top:255px;left:1px;width:852px">
<div class="a" style="left:0;top:1px;right:0;bottom:1px;border:1px dotted #000"></div>
<svg class="ic" style="left:5px;top:2px" width="14" height="17" viewBox="0 0 14 17"><rect x=".5" y=".5" width="11.3" height="15.2" fill="url(#fg)" stroke="#f2d47c"/><rect x="10.6" y="9.2" width="2.3" height="6.5" fill="#f7d565"/></svg>
<div class="t nm" style="left:21px;top:0">modules</div>
<div class="t" style="left:468px;top:0"><span class="c">文件夹</span></div>
<div class="t" style="left:548px;top:0">2018/12/21, 0:00</div>
<div class="t at" style="left:698px;top:0">drwxr-xr-x</div>
<div class="t" style="left:778px;top:0">1000</div>
</div>
<div class="r" style="top:276px;left:1px;width:852px">
<svg class="ic" style="left:5px;top:2px" width="14" height="17" viewBox="0 0 14 17"><rect x=".5" y=".5" width="11.3" height="15.2" fill="url(#fg)" stroke="#f2d47c"/><rect x="10.6" y="9.2" width="2.3" height="6.5" fill="#f7d565"/></svg>
<div class="t nm" style="left:21px;top:0">patch</div>
<div class="t" style="left:468px;top:0"><span class="c">文件夹</span></div>
<div class="t" style="left:548px;top:0">2018/10/21, 0:00</div>
<div class="t at" style="left:698px;top:0">drwxr-xr-x</div>
<div class="t" style="left:778px;top:0">1000</div>
</div>
<div class="r" style="top:297px;left:1px;width:852px">
<svg class="ic" style="left:5px;top:2px" width="14" height="17" viewBox="0 0 14 17"><rect x=".5" y=".5" width="11.3" height="15.2" fill="url(#fg)" stroke="#f2d47c"/><rect x="10.6" y="9.2" width="2.3" height="6.5" fill="#f7d565"/></svg>
<div class="t nm" style="left:21px;top:0">plugins</div>
<div class="t" style="left:468px;top:0"><span class="c">文件夹</span></div>
<div class="t" style="left:548px;top:0">2018/10/21, 0:00</div>
<div class="t at" style="left:698px;top:0">drwxr-xr-x</div>
<div class="t" style="left:778px;top:0">1000</div>
</div>
<div class="r" style="top:318px;left:1px;width:852px">
<svg class="ic" style="left:5px;top:2px" width="14" height="17" viewBox="0 0 14 17"><rect x=".5" y=".5" width="11.3" height="15.2" fill="url(#fg)" stroke="#f2d47c"/><rect x="10.6" y="9.2" width="2.3" height="6.5" fill="#f7d565"/></svg>
<div class="t nm" style="left:21px;top:0">runtime</div>
<div class="t" style="left:468px;top:0"><span class="c">文件夹</span></div>
<div class="t" style="left:548px;top:0">2020/7/18, 11:14</div>
<div class="t at" style="left:698px;top:0">drwxr-xr-x</div>
<div class="t" style="left:778px;top:0">1000</div>
</div>
<div class="r" style="top:339px;left:1px;width:852px">
<svg class="ic" style="left:5px;top:2px" width="14" height="17" viewBox="0 0 14 17"><rect x=".5" y=".5" width="11.3" height="15.2" fill="url(#fg)" stroke="#f2d47c"/><rect x="10.6" y="9.2" width="2.3" height="6.5" fill="#f7d565"/></svg>
<div class="t nm" style="left:21px;top:0">utils</div>
<div class="t" style="left:468px;top:0"><span class="c">文件夹</span></div>
<div class="t" style="left:548px;top:0">2018/12/15, 0:00</div>
<div class="t at" style="left:698px;top:0">drwxr-xr-x</div>
<div class="t" style="left:778px;top:0">1000</div>
</div>
<div class="r" style="top:360px;left:1px;width:852px">
<svg class="ic" style="left:5px;top:2px" width="14" height="17" viewBox="0 0 14 17"><rect x=".5" y=".5" width="11.3" height="15.2" fill="url(#fg)" stroke="#f2d47c"/><rect x="10.6" y="9.2" width="2.3" height="6.5" fill="#f7d565"/></svg>
<div class="t nm" style="left:21px;top:0">validators</div>
<div class="t" style="left:468px;top:0"><span class="c">文件夹</span></div>
<div class="t" style="left:548px;top:0">2018/11/29, 0:00</div>
<div class="t at" style="left:698px;top:0">drwxr-xr-x</div>
<div class="t" style="left:778px;top:0">1000</div>
</div>
<div class="r" style="top:381px;left:1px;width:852px">
<svg class="ic" style="left:5px;top:2px" width="14" height="17" viewBox="0 0 14 17"><rect x=".5" y=".5" width="11.3" height="15.2" fill="url(#fg)" stroke="#f2d47c"/><rect x="10.6" y="9.2" width="2.3" height="6.5" fill="#f7d565"/></svg>
<div class="t nm" style="left:21px;top:0">vendor</div>
<div class="t" style="left:468px;top:0"><span class="c">文件夹</span></div>
<div class="t" style="left:548px;top:0">2018/12/15, 0:00</div>
<div class="t at" style="left:698px;top:0">drwxr-xr-x</div>
<div class="t" style="left:778px;top:0">1000</div>
</div>
<div class="r" style="top:402px;left:1px;width:852px">
<svg class="ic" style="left:5px;top:2px" width="14" height="17" viewBox="0 0 14 17"><rect x=".5" y=".5" width="11.3" height="15.2" fill="url(#fg)" stroke="#f2d47c"/><rect x="10.6" y="9.2" width="2.3" height="6.5" fill="#f7d565"/></svg>
<div class="t nm" style="left:21px;top:0">views</div>
<div class="t" style="left:468px;top:0"><span class="c">文件夹</span></div>
<div class="t" style="left:548px;top:0">2018/12/12, 0:00</div>
<div class="t at" style="left:698px;top:0">drwxr-xr-x</div>
<div class="t" style="left:778px;top:0">1000</div>
</div>
<div class="r" style="top:423px;left:1px;width:852px">
<svg class="ic" style="left:5px;top:2px" width="14" height="17" viewBox="0 0 14 17"><rect x=".5" y=".5" width="11.3" height="15.2" fill="url(#fg)" stroke="#f2d47c"/><rect x="10.6" y="9.2" width="2.3" height="6.5" fill="#f7d565"/></svg>
<div class="t nm" style="left:21px;top:0">web</div>
<div class="t" style="left:468px;top:0"><span class="c">文件夹</span></div>
<div class="t" style="left:548px;top:0">2020/7/24, 16:54</div>
<div class="t at" style="left:698px;top:0">drwxr-xr-x</div>
<div class="t" style="left:778px;top:0">1000</div>
</div>
<div class="r" style="top:444px;left:1px;width:852px">
<svg class="ic" style="left:5px;top:2px" width="14" height="17" viewBox="0 0 14 17"><rect x=".5" y=".5" width="11.3" height="15.2" fill="url(#fg)" stroke="#f2d47c"/><rect x="10.6" y="9.2" width="2.3" height="6.5" fill="#f7d565"/></svg>
<div class="t nm" style="left:21px;top:0">widgets</div>
<div class="t" style="left:468px;top:0"><span class="c">文件夹</span></div>
<div class="t" style="left:548px;top:0">2018/10/21, 0:00</div>
<div class="t at" style="left:698px;top:0">drwxr-xr-x</div>
<div class="t" style="left:778px;top:0">1000</div>
</div>
<div class="r" style="top:465px;left:1px;width:852px">
<svg class="ic" style="left:5px;top:2px" width="14" height="17" viewBox="0 0 14 17"><path d="M.5 .5H7.7L11.7 4.5V15.5H.5Z" fill="#fff" stroke="#a4a4a4"/><path d="M7.7 .5V4.5H11.7" fill="none" stroke="#a4a4a4"/></svg>
<div class="t nm" style="left:21px;top:0">.env</div>
<div class="t" style="right:397px;top:0">160 Bytes</div>
<div class="t" style="left:468px;top:0">ENV <span class="c">文件</span></div>
<div class="t" style="left:548px;top:0">2020/7/14, 10:54</div>
<div class="t at" style="left:698px;top:0">-rwxr-xr-x</div>
<div class="t" style="left:778px;top:0">1000</div>
</div>
<div class="r" style="top:486px;left:1px;width:852px">
<svg class="ic" style="left:5px;top:2px" width="14" height="17" viewBox="0 0 14 17"><path d="M.5 .5H7.7L11.7 4.5V15.5H.5Z" fill="#fff" stroke="#a4a4a4"/><path d="M7.7 .5V4.5H11.7" fill="none" stroke="#a4a4a4"/></svg>
<div class="t nm" style="left:21px;top:0">.env.example</div>
<div class="t" style="right:397px;top:0">1KB</div>
<div class="t ex" style="left:468px;top:0">EXAMPLE...</div>
<div class="t" style="left:548px;top:0">2018/8/10, 0:00</div>
<div class="t at" style="left:698px;top:0">-rwxr-xr-x</div>
<div class="t" style="left:778px;top:0">1000</div>
</div>
<svg class="ic" style="left:6px;top:509px" width="14" height="17" viewBox="0 0 14 17"><path d="M.5 .5H7.7L11.7 4.5V15.5H.5Z" fill="#fff" stroke="#a4a4a4"/><path d="M7.7 .5V4.5H11.7" fill="none" stroke="#a4a4a4"/></svg>
</div>
<div class="a" style="left:0;top:685px;width:1868px;height:1px;background:#cfcfcf"></div>
<div class="a" style="left:0;top:686px;width:1868px;height:27px;background:#f0f0f0"></div>
<div class="a" style="left:0;top:686px;width:31px;height:27px;background:#919191"></div>
<div class="t" style="left:1px;top:689px;color:#fff;font-weight:bold"><span class="c">传输</span></div>
<div class="t" style="left:39px;top:689px"><span class="c">日志</span></div>
<div class="a" style="left:0;top:713px;width:1868px;height:1px;background:#c8c8c8"></div>
<div class="a" style="left:0;top:714px;width:1868px;height:24px;background:#e6e6e6"></div>
<div class="a" style="left:0;top:738px;width:1868px;height:279px;background:#f8f8f8"></div>
<div class="a" style="left:194px;top:714px;width:1px;height:24px;background:#dadada"></div>
<div class="a" style="left:259px;top:714px;width:1px;height:24px;background:#dadada"></div>
<div class="a" style="left:359px;top:714px;width:1px;height:24px;background:#dadada"></div>
<div class="a" style="left:509px;top:714px;width:1px;height:24px;background:#dadada"></div>
<div class="a" style="left:654px;top:714px;width:1px;height:24px;background:#dadada"></div>
<div class="a" style="left:693px;top:714px;width:1px;height:24px;background:#dadada"></div>
<div class="a" style="left:859px;top:714px;width:1px;height:24px;background:#dadada"></div>
<div class="a" style="left:939px;top:714px;width:1px;height:24px;background:#dadada"></div>
<div class="a" style="left:1009px;top:714px;width:1px;height:24px;background:#dadada"></div>
<div class="a" style="left:1079px;top:714px;width:1px;height:24px;background:#dadada"></div>
<div class="t" style="left:0px;top:715px"><span class="c">名称</span></div>
<div class="t" style="left:200px;top:715px"><span class="c">状态</span></div>
<div class="t" style="left:298px;top:715px"><span class="c">进度</span></div>
<div class="t" style="left:365px;top:715px"><span class="c">大小</span></div>
<div class="t" style="left:515px;top:715px"><span class="c">本地路径</span></div>
<div class="t" style="left:700px;top:715px"><span class="c">远程路径</span></div>
<div class="t" style="left:865px;top:715px"><span class="c">速度</span></div>
<div class="t" style="left:945px;top:715px"><span class="c">估计剩余</span>...</div>
<div class="t" style="left:1015px;top:715px"><span class="c">经过时间</span></div>
<div class="t" style="left:664px;top:715px;letter-spacing:2.2px;font-size:11px">&lt;-&gt;</div>
<div class="a" style="left:0;top:744px;width:9px;height:9px;border:1px solid #d6d6d6;background:#fcfcfc"></div><div class="a" style="left:2px;top:748px;width:5px;height:1px;background:#b4b4b4"></div><div class="a" style="left:4px;top:746px;width:1px;height:5px;background:#b4b4b4"></div>
<svg class="ic" style="left:13px;top:741px" width="14" height="17" viewBox="0 0 14 17"><rect x=".5" y=".5" width="11.3" height="15.2" fill="url(#fg)" stroke="#f2d47c"/><rect x="10.6" y="9.2" width="2.3" height="6.5" fill="#f7d565"/></svg>
<div class="t nm" style="left:33px;top:738px">models</div>
<div class="t" style="left:201px;top:738px"><span class="c">进行中</span></div>
<div class="a" style="left:260px;top:740px;width:100px;height:18px;background:#e2e2e2"></div>
<div class="a" style="left:260px;top:740px;width:81px;height:18px;background:#0987df"></div>
<div class="t" style="left:260px;width:100px;text-align:center;top:738px">81%</div>
<div class="t" style="left:366px;top:738px">1.23MB/1.51MB</div>
<div class="t" style="left:516px;top:738px;letter-spacing:.38px">D:\www\yiyao\models</div>
<svg class="a" style="left:670px;top:744.5px" width="10" height="10" viewBox="0 0 10 10"><path d="M3.4 0H6.6V4.6H9.8L5 9.8 .2 4.6H3.4Z" fill="#1585da"/></svg>
<div class="t" style="left:701px;top:738px;letter-spacing:.1px">47.104.233.203:/models</div>
<div class="t" style="left:866px;top:738px">227.90 KB/s</div>
<div class="t" style="left:946px;top:738px">00:00:01</div>
<div class="t" style="left:1016px;top:738px">00:00:04</div>
<svg class="ic" style="left:13px;top:762px" width="14" height="17" viewBox="0 0 14 17"><rect x=".5" y=".5" width="11.3" height="15.2" fill="url(#fg)" stroke="#f2d47c"/><rect x="10.6" y="9.2" width="2.3" height="6.5" fill="#f7d565"/></svg>
<div class="t nm" style="left:33px;top:759px">modules</div>
<div class="t" style="left:201px;top:759px"><span class="c">就绪</span></div>
<div class="a" style="left:260px;top:761px;width:100px;height:18px;background:#e2e2e2"></div>
<div class="t" style="left:260px;width:100px;text-align:center;top:759px">0%</div>
<div class="t" style="left:516px;top:759px;letter-spacing:.38px">D:\www\yiyao\modules</div>
<svg class="a" style="left:670px;top:765.5px" width="10" height="10" viewBox="0 0 10 10"><path d="M3.4 0H6.6V4.6H9.8L5 9.8 .2 4.6H3.4Z" fill="#1585da"/></svg>
<div class="t" style="left:701px;top:759px;letter-spacing:.1px">47.104.233.203:/modules</div>
<div class="a" style="left:0;top:1017px;width:1868px;height:13px;background:#e0e0e0"></div>
<div class="t sb" style="left:1px;top:1018px"><span class="c">已连接</span> 47.104.233.203:21</div>
<div class="t sb" style="left:1629px;top:1018px"><span class="c">二进制</span></div>
<div class="t sb" style="left:1688px;top:1018px">4<span class="c">已选择</span></div>
<div class="t sb" style="left:1852px;top:1018px">0 Bytes</div>
</div></body></html>
